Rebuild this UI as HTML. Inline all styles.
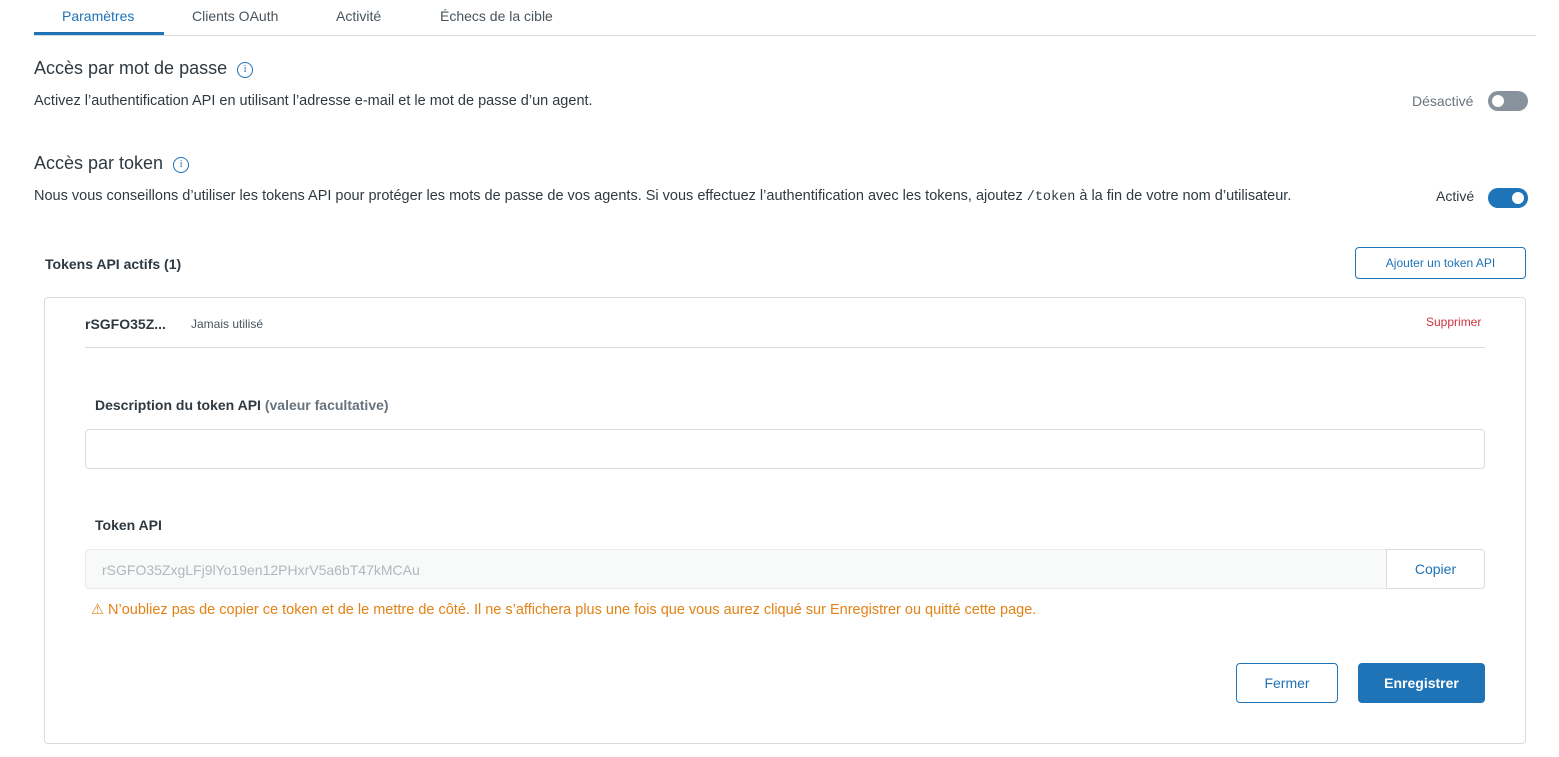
<!DOCTYPE html>
<html><head><meta charset="utf-8"><style>
*{box-sizing:border-box;margin:0;padding:0}
body{width:1559px;height:757px;background:#fff;font-family:"Liberation Sans",sans-serif;color:#2f3941;position:relative;overflow:hidden}
.a{position:absolute;white-space:nowrap}
.tab{font-size:14px;color:#49545c;top:8px}
.info{display:inline-block;width:16px;height:16px;border:1px solid #1f73b7;border-radius:50%;color:#1f73b7;font-size:10px;text-align:center;line-height:14px;font-family:"Liberation Serif",serif;vertical-align:2px;margin-left:10px}
.tg{position:absolute;width:40px;height:20px;border-radius:10px}
.tg i{position:absolute;top:4px;width:12px;height:12px;border-radius:50%;background:#fff}
.btn{position:absolute;border:1px solid #1f73b7;border-radius:4px;color:#1f73b7;text-align:center;background:#fff}
.t{font-size:14.5px}
</style></head><body>
<div class="a tab" style="left:62px;color:#1f73b7">Paramètres</div>
<div class="a tab" style="left:192px">Clients OAuth</div>
<div class="a tab" style="left:336px">Activité</div>
<div class="a tab" style="left:440px">Échecs de la cible</div>
<div class="a" style="left:34px;top:35px;width:1502px;height:1px;background:#d8dcde"></div>
<div class="a" style="left:34px;top:32px;width:130px;height:3px;background:#1f73b7"></div>

<div class="a" style="left:34px;top:58px;font-size:18px;color:#2f3941">Accès par mot de passe<span class="info">i</span></div>
<div class="a t" style="left:34px;top:93px">Activez l’authentification API en utilisant l’adresse e-mail et le mot de passe d’un agent.</div>
<div class="a" style="left:1412px;top:93px;font-size:14px;color:#68737d">Désactivé</div>
<div class="tg" style="left:1488px;top:91px;background:#87929d"><i style="left:4px"></i></div>

<div class="a" style="left:34px;top:153px;font-size:18px">Accès par token<span class="info">i</span></div>
<div class="a t" style="left:34px;top:188px">Nous vous conseillons d’utiliser les tokens API pour protéger les mots de passe de vos agents. Si vous effectuez l’authentification avec les tokens, ajoutez <span style="font-family:'Liberation Mono',monospace;font-size:13.5px">/token</span> à la fin de votre nom d’utilisateur.</div>
<div class="a" style="left:1436px;top:188px;font-size:14px">Activé</div>
<div class="tg" style="left:1488px;top:188px;background:#1f73b7"><i style="left:24px"></i></div>

<div class="a" style="left:45px;top:256px;font-size:14px;font-weight:bold">Tokens API actifs (1)</div>
<div class="btn" style="left:1355px;top:247px;width:171px;height:32px;font-size:12px;line-height:30px">Ajouter un token API</div>

<div class="a" style="left:44px;top:297px;width:1482px;height:447px;border:1px solid #d8dcde;border-radius:4px"></div>
<div class="a" style="left:85px;top:316px;font-size:14px;font-weight:bold">rSGFO35Z...</div>
<div class="a" style="left:191px;top:317px;font-size:12px;color:#49545c">Jamais utilisé</div>
<div class="a" style="left:1426px;top:315px;font-size:12px;color:#cc3340">Supprimer</div>
<div class="a" style="left:85px;top:347px;width:1400px;height:1px;background:#d8dcde"></div>

<div class="a" style="left:95px;top:397px;font-size:14px;font-weight:bold">Description du token API <span style="color:#68737d">(valeur facultative)</span></div>
<div class="a" style="left:85px;top:429px;width:1400px;height:40px;border:1px solid #d8dcde;border-radius:4px"></div>

<div class="a" style="left:95px;top:517px;font-size:14px;font-weight:bold">Token API</div>
<div class="a" style="left:85px;top:549px;width:1302px;height:40px;border:1px solid #e9ebed;border-radius:4px 0 0 4px;background:#f8f9f9;padding:12px 16px;font-size:14px;color:#b0b8be">rSGFO35ZxgLFj9lYo19en12PHxrV5a6bT47kMCAu</div>
<div class="a" style="left:1386px;top:549px;width:99px;height:40px;border:1px solid #d8dcde;border-radius:0 4px 4px 0;text-align:center;line-height:38px;font-size:14px;color:#1f73b7">Copier</div>
<div class="a t" style="left:91px;top:602px;color:#e38215">⚠ N’oubliez pas de copier ce token et de le mettre de côté. Il ne s’affichera plus une fois que vous aurez cliqué sur Enregistrer ou quitté cette page.</div>

<div class="btn" style="left:1236px;top:663px;width:102px;height:40px;line-height:38px;font-size:14px">Fermer</div>
<div class="btn" style="left:1358px;top:663px;width:127px;height:40px;line-height:38px;font-size:14px;background:#1f73b7;color:#fff;font-weight:bold">Enregistrer</div>
</body></html>
